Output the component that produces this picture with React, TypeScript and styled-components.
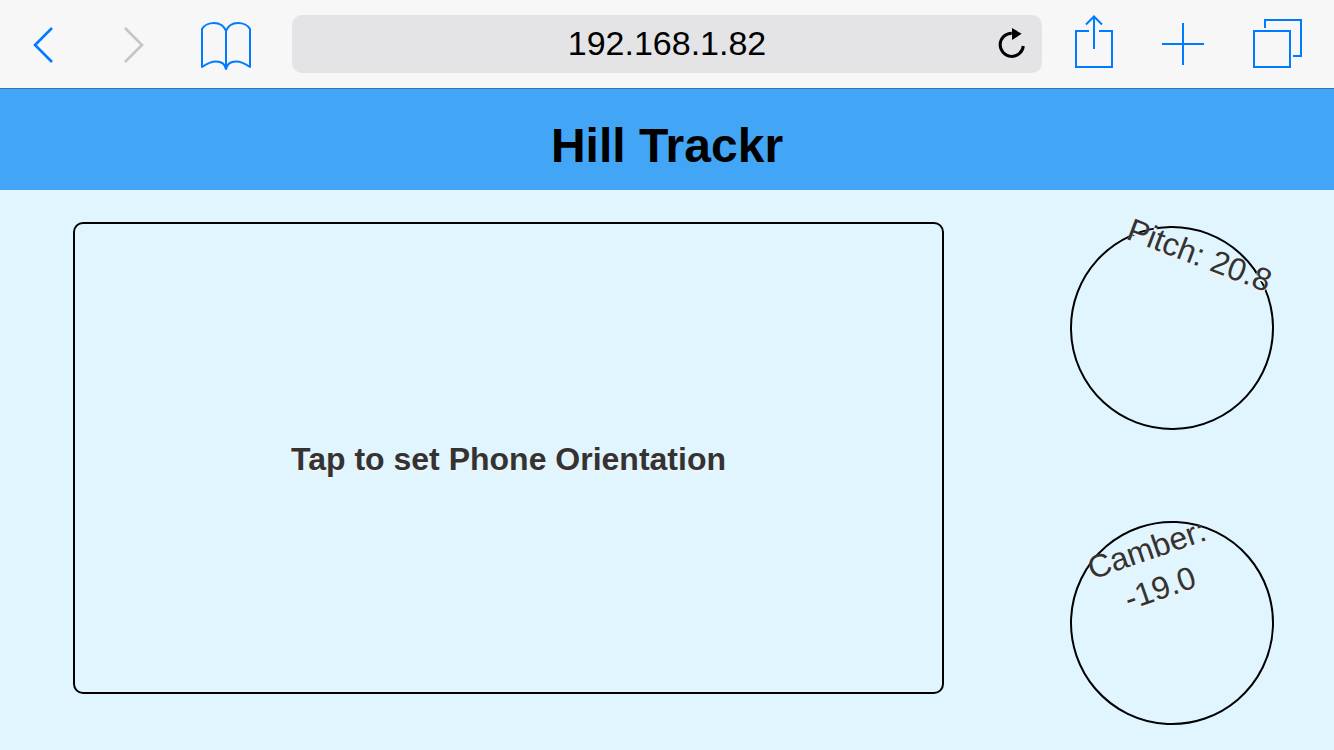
import React from "react";
import styled, { createGlobalStyle } from "styled-components";

const GlobalStyle = createGlobalStyle`
  *, *::before, *::after { box-sizing: border-box; }
  html, body { margin: 0; padding: 0; }
  html { background: #e1f5fe; }
  body {
    font-family: "Liberation Sans", Arial, sans-serif;
    font-size: 32px;
    line-height: 42px;
    color: #333;
  }
`;

const Toolbar = styled.nav`
  display: flex;
  align-items: center;
  height: 89px;
  padding: 0 30px 0 15px;
  background: #f7f7f7;
  border-bottom: 1px solid #3277b3;
`;

const ToolGroup = styled.div`
  display: flex;
  flex: none;
  gap: 35px;
`;

const ToolButton = styled.button`
  display: block;
  width: 56px;
  height: 88px;
  padding: 0;
  border: 0;
  background: none;
  color: #007aff;

  &:disabled {
    color: #c5c5c5;
  }
`;

const Icon = styled.svg`
  display: block;
  fill: none;
  stroke: currentColor;
  stroke-width: 2;
`;

const AddressBar = styled.div`
  position: relative;
  flex: 1;
  min-width: 0;
  margin: 0 24px 0 39px;
`;

const AddressInput = styled.input`
  display: block;
  width: 100%;
  height: 58px;
  padding: 0 56px 2px;
  border: 0;
  border-radius: 10px;
  background: #e4e4e6;
  color: #000;
  font-family: inherit;
  font-size: 34px;
  text-align: center;
`;

const ReloadButton = styled.button`
  position: absolute;
  top: 0;
  right: 0;
  width: 60px;
  height: 58px;
  padding: 0;
  border: 0;
  background: none;
  color: #000;
`;

const Header = styled.header`
  padding: 29px 16px 16px;
  background: #42a5f5;
`;

const Title = styled.h1`
  margin: 0;
  color: #000;
  font-size: 48px;
  line-height: 56px;
  text-align: center;
`;

const Main = styled.main`
  display: flex;
  gap: 126px;
  padding: 32px 60px 24px 73px;
`;

const OrientationButton = styled.button`
  flex: 1;
  min-width: 0;
  height: 472px;
  padding: 2px 0 0;
  border: 2px solid #000;
  border-radius: 10px;
  background: none;
  color: #333;
  font-family: inherit;
  font-size: 32px;
  font-weight: bold;
  line-height: 42px;
  text-shadow: 0 2px 0 #f3f3f3;
`;

const Gauges = styled.div`
  display: flex;
  flex: none;
  flex-direction: column;
  gap: 91px;
  padding-top: 4px;
`;

const Gauge = styled.div<{ $angle: number }>`
  width: 204px;
  height: 204px;
  padding: 2px 16px 0;
  border: 2px solid #000;
  border-radius: 50%;
  line-height: 41px;
  text-align: center;
  text-shadow: 0 2px 0 #f3f3f3;
  transform: rotate(${(p) => p.$angle}deg);
`;

const readings = [
  { label: "Pitch", value: 20.8 },
  { label: "Camber", value: -19 },
];

export default function App() {
  return (
    <>
      <GlobalStyle />
      <Toolbar aria-label="Browser">
        <ToolGroup>
          <ToolButton type="button" aria-label="Back">
            <Icon width="56" height="88" viewBox="0 0 56 88">
              <path d="M37 28L20 45L37 62" strokeWidth="2.6" />
            </Icon>
          </ToolButton>
          <ToolButton type="button" aria-label="Forward" disabled>
            <Icon width="56" height="88" viewBox="0 0 56 88">
              <path d="M19 28L36 45L19 62" strokeWidth="2.6" />
            </Icon>
          </ToolButton>
          <ToolButton type="button" aria-label="Bookmarks">
            <Icon width="56" height="88" viewBox="0 0 56 88">
              <path
                d="M29 69V31C27 26 22.500 23 17 23C12 23 7 25.500 5 29V67C10 63.500 14.500 61.500 19 61.500C24 61.500 28 64 29 69C30 64 34 61.500 39 61.500C43.500 61.500 48 63.500 53 67V29C51 25.500 46 23 41 23C35.500 23 31 26 29 31"
                strokeLinejoin="round"
              />
            </Icon>
          </ToolButton>
        </ToolGroup>
        <AddressBar>
          <AddressInput type="text" aria-label="Address" defaultValue="192.168.1.82" />
          <ReloadButton type="button" aria-label="Reload">
            <Icon width="60" height="58" viewBox="0 0 60 58">
              <path d="M29.800 18.200A11.600 11.600 0 1 0 41.300 31" strokeWidth="3" />
              <path d="M30 13V25L39.600 18.800Z" fill="currentColor" stroke="none" />
            </Icon>
          </ReloadButton>
        </AddressBar>
        <ToolGroup>
          <ToolButton type="button" aria-label="Share">
            <Icon width="56" height="88" viewBox="0 0 56 88">
              <path d="M23 31H10V67H46V31H33M28 49V16M20 24.500L28 16.500L36 24.500" />
            </Icon>
          </ToolButton>
          <ToolButton type="button" aria-label="New tab">
            <Icon width="56" height="88" viewBox="0 0 56 88">
              <path d="M5 44H47M26 23V65" />
            </Icon>
          </ToolButton>
          <ToolButton type="button" aria-label="Show tabs">
            <Icon width="56" height="88" viewBox="0 0 56 88">
              <path d="M6 31H42V67H6ZM17 28V20H53V56H45" />
            </Icon>
          </ToolButton>
        </ToolGroup>
      </Toolbar>
      <Header>
        <Title>Hill Trackr</Title>
      </Header>
      <Main>
        <OrientationButton type="button">Tap to set Phone Orientation</OrientationButton>
        <Gauges>
          {readings.map(({ label, value }) => (
            <Gauge key={label} $angle={value}>
              {label}: {value.toFixed(1)}
            </Gauge>
          ))}
        </Gauges>
      </Main>
    </>
  );
}
